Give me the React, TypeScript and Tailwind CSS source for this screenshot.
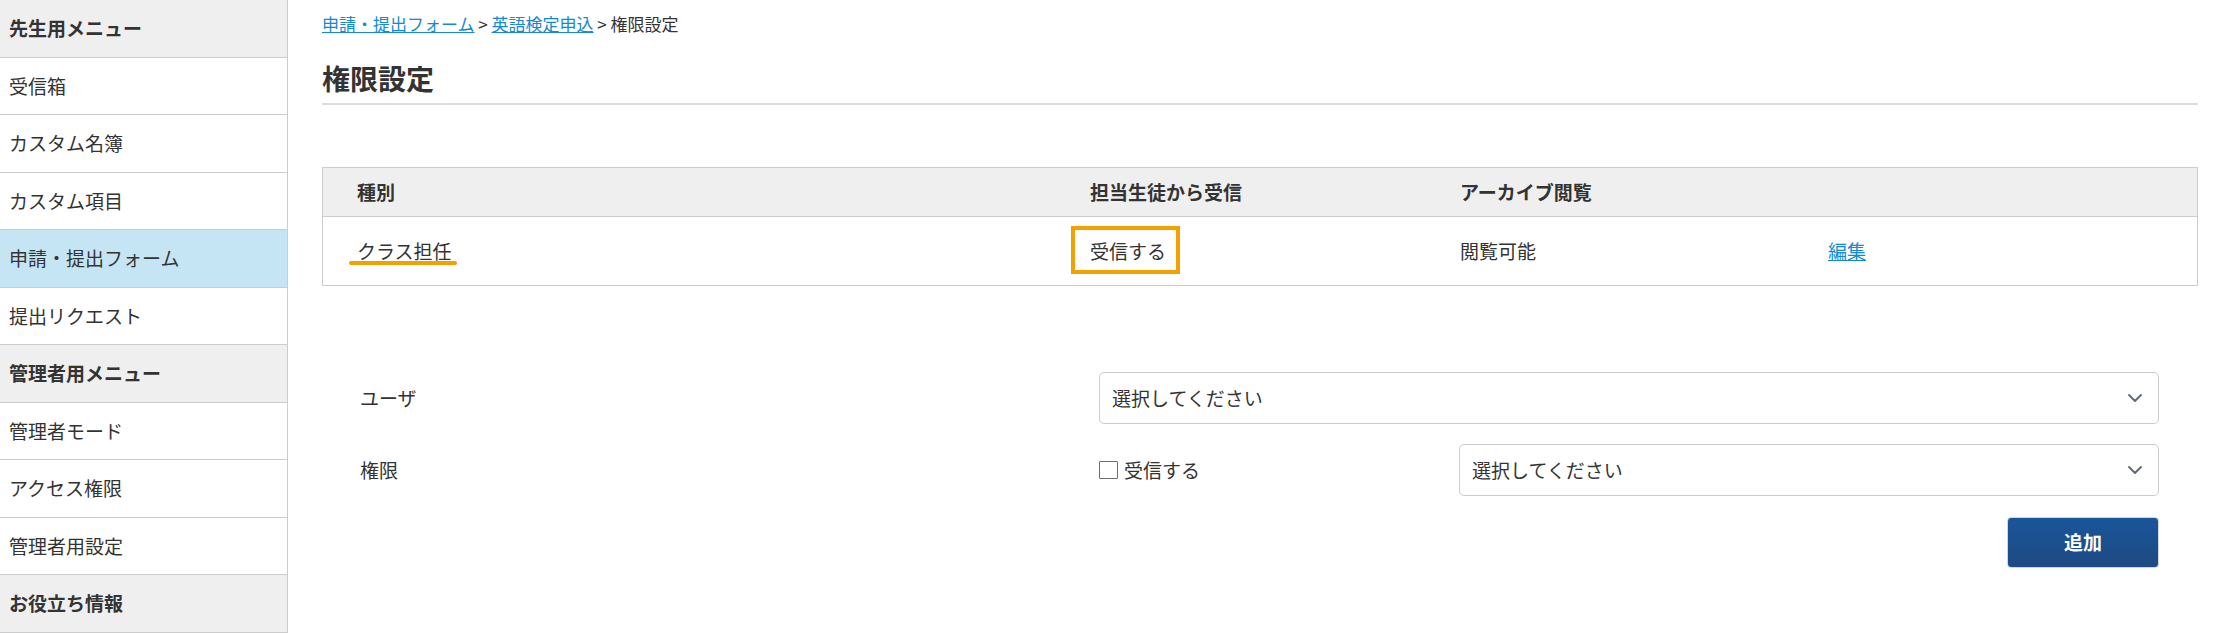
import React from "react";

const Chevron = () => (
  <svg width="14" height="8" viewBox="0 0 14 8" fill="none" className="shrink-0">
    <path d="M1 1l6 6 6-6" stroke="#5f6673" strokeWidth="1.8" strokeLinecap="round" strokeLinejoin="round" />
  </svg>
);

const SideRow = ({ label, head, active }: { label: string; head?: boolean; active?: boolean }) => (
  <div
    className={
      "h-[57.5px] border-b border-[#cccccc] flex items-center pl-[9px] text-[19px] " +
      (head ? "bg-[#efefef] font-bold" : active ? "bg-[#c5e5f4]" : "bg-white")
    }
  >
    {label}
  </div>
);

const Select = ({ className }: { className: string }) => (
  <div
    className={
      "h-[52px] border border-[#cccccc] rounded-[5px] bg-white flex items-center justify-between pl-[12px] pr-[16px] text-[19px] " +
      className
    }
  >
    <span>選択してください</span>
    <Chevron />
  </div>
);

export default function App() {
  return (
    <div className="flex w-[2227px] h-[633px] overflow-hidden bg-white text-[#333333] font-['Noto_Sans_CJK_JP','Noto_Sans',sans-serif]">
      <aside className="w-[288px] shrink-0 border-r border-[#cccccc] bg-white">
        <SideRow label="先生用メニュー" head />
        <SideRow label="受信箱" />
        <SideRow label="カスタム名簿" />
        <SideRow label="カスタム項目" />
        <SideRow label="申請・提出フォーム" active />
        <SideRow label="提出リクエスト" />
        <SideRow label="管理者用メニュー" head />
        <SideRow label="管理者モード" />
        <SideRow label="アクセス権限" />
        <SideRow label="管理者用設定" />
        <SideRow label="お役立ち情報" head />
      </aside>

      <main className="flex-1 pl-[34px] pr-[29px]">
        <div className="pt-[11px] text-[17px] leading-[25.5px]">
          <a className="text-[#1589d1] underline">申請・提出フォーム</a>
          <span> &gt; </span>
          <a className="text-[#1589d1] underline">英語検定申込</a>
          <span> &gt; 権限設定</span>
        </div>

        <h1 className="mt-[21.5px] pb-[5px] border-b-2 border-[#dddddd] text-[28px] leading-[40px] font-bold">
          権限設定
        </h1>

        <div className="mt-[62px] border border-[#cccccc] text-[19px]">
          <div className="grid grid-cols-[733px_370px_368px_1fr] h-[49px] bg-[#efefef] border-b border-[#cccccc] items-center font-bold">
            <div className="pl-[34px]">種別</div>
            <div className="pl-[34px]">担当生徒から受信</div>
            <div className="pl-[34px]">アーカイブ閲覧</div>
            <div></div>
          </div>
          <div className="grid grid-cols-[733px_370px_368px_1fr] h-[68px] items-center leading-[28px]">
            <div className="pl-[34px]">
              <span className="relative inline-block">
                クラス担任
                <span className="absolute left-[-8px] right-[-5px] top-[24px] h-[3.5px] rounded-full bg-[#f2a100]"></span>
              </span>
            </div>
            <div className="pl-[34px]">
              <span className="relative inline-block">
                受信する
                <span className="absolute left-[-19px] top-[-11px] w-[109px] h-[48px] border-[4px] border-[#f2a100]"></span>
              </span>
            </div>
            <div className="pl-[34px]">閲覧可能</div>
            <div className="pl-[34px]">
              <a className="text-[#1589d1] underline">編集</a>
            </div>
          </div>
        </div>

        <div className="mt-[86px] pl-[38px] pr-[39px] text-[19px] flex flex-col gap-[20px]">
          <div className="grid grid-cols-[739px_1fr] items-center">
            <div>ユーザ</div>
            <Select className="w-full" />
          </div>
          <div className="grid grid-cols-[739px_360px_1fr] items-center">
            <div>権限</div>
            <label className="flex items-center gap-[6px]">
              <span className="w-[19px] h-[18px] border border-[#6f6f6f] rounded-[1px] bg-white"></span>
              <span>受信する</span>
            </label>
            <Select className="w-full" />
          </div>
          <div className="flex justify-end mt-[1px]">
            <button className="w-[152px] h-[51px] rounded-[4px] bg-linear-to-b from-[#1a559a] to-[#1d4a82] text-white font-bold text-[19px] border border-[#d0d6de]">
              追加
            </button>
          </div>
        </div>
      </main>
    </div>
  );
}
